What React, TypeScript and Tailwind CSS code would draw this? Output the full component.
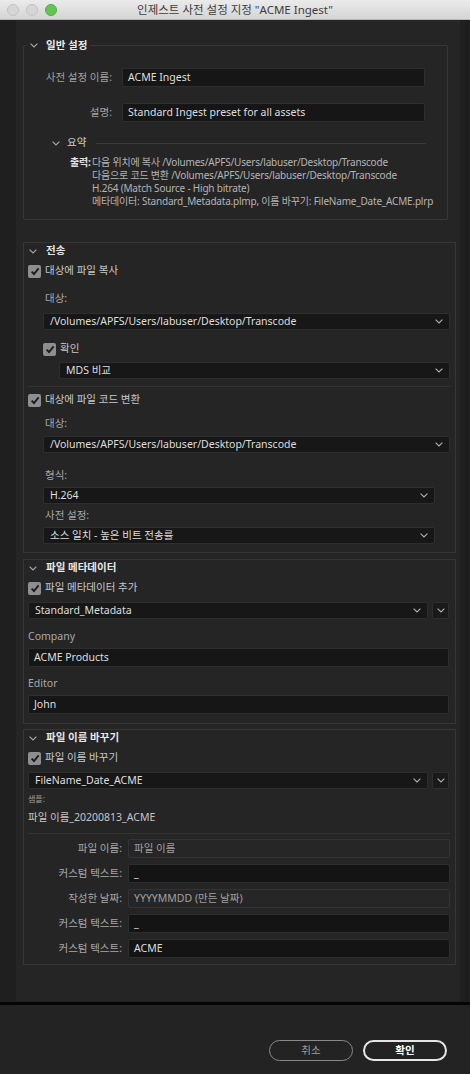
import React from 'react';

const Chevron = ({ className = '' }: { className?: string }) => (
  <svg width="8" height="5" viewBox="0 0 8 5" className={className}>
    <path d="M0.6 0.6 L4 4 L7.4 0.6" fill="none" stroke="currentColor" strokeWidth="1.1" />
  </svg>
);

const Check = () => (
  <span className="flex h-[13px] w-[13px] shrink-0 items-center justify-center rounded-[2px] bg-[#8e8e8e]">
    <svg width="10" height="9" viewBox="0 0 10 9">
      <path d="M1.6 4.6 L4 7 L8.6 1.4" fill="none" stroke="#1c1c1c" strokeWidth="1.9" />
    </svg>
  </span>
);

const Select = ({ value, className = '' }: { value: string; className?: string }) => (
  <div
    className={`flex h-[17px] items-center justify-between rounded-[2px] border border-[#2e2e2e] bg-[#171717] pr-[6px] pl-[6px] text-[10.5px] whitespace-nowrap text-[#dedede] ${className}`}
  >
    <span>{value}</span>
    <Chevron className="text-[#b0b0b0]" />
  </div>
);

const Field = ({ value, className = '' }: { value: string; className?: string }) => (
  <div
    className={`flex h-[19px] items-center rounded-[2px] border border-[#2e2e2e] bg-[#161616] px-[5px] text-[10.5px] whitespace-nowrap text-[#dedede] ${className}`}
  >
    {value}
  </div>
);

const SectionHeader = ({ title }: { title: string }) => (
  <div className="flex h-[16px] items-center pl-[5px]">
    <Chevron className="text-[#a8a8a8]" />
    <span className="ml-[9px] text-[10.5px] font-bold text-[#e8e8e8]">{title}</span>
  </div>
);

const CheckRow = ({ label, className = '' }: { label: string; className?: string }) => (
  <div className={`flex h-[14px] items-center ${className}`}>
    <Check />
    <span className="ml-[4px] text-[10.5px] text-[#c8c8c8]">{label}</span>
  </div>
);

const Label = ({ text, className = '' }: { text: string; className?: string }) => (
  <div className={`flex h-[14px] items-center text-[10.5px] text-[#a8a8a8] ${className}`}>{text}</div>
);

const RenameRow = ({ label, value, disabled = false }: { label: string; value: string; disabled?: boolean }) => (
  <div className="flex items-center">
    <span className="w-[98px] text-right text-[10.5px] whitespace-nowrap text-[#a8a8a8]">{label}</span>
    <div
      className={`ml-[6px] flex h-[19px] w-[322px] items-center rounded-[2px] border px-[5px] text-[10.5px] ${
        disabled ? 'border-[#333333] bg-[#262626] text-[#a0a0a0]' : 'border-[#2e2e2e] bg-[#141414] text-[#dedede]'
      }`}
    >
      {value}
    </div>
  </div>
);

const SmallDrop = () => (
  <div className="flex h-[17px] w-[17px] items-center justify-center rounded-[2px] border border-[#2e2e2e] bg-[#1a1a1a]">
    <Chevron className="text-[#b0b0b0]" />
  </div>
);

export default function App() {
  return (
    <div className="flex h-[1074px] w-[470px] flex-col overflow-hidden bg-[#222222] font-['Noto_Sans','Noto_Sans_CJK_KR',sans-serif]">
      {/* title bar */}
      <div className="relative flex h-[20px] shrink-0 items-center justify-center border-b border-[#b8b8b8] bg-gradient-to-b from-[#ebebeb] to-[#d5d5d5]">
        <div className="absolute top-[4px] left-[7px] flex gap-[7px]">
          <span className="h-[12px] w-[12px] rounded-full border border-[#c2c2c2] bg-[#d6d6d6]" />
          <span className="h-[12px] w-[12px] rounded-full border border-[#c2c2c2] bg-[#d6d6d6]" />
          <span className="h-[12px] w-[12px] rounded-full border border-[#4fae42] bg-[#62c655]" />
        </div>
        <span className="text-[11.5px] text-[#3c3c3c]">인제스트 사전 설정 지정 "ACME Ingest"</span>
      </div>

      {/* scroll area */}
      <div className="flex h-[982px] shrink-0 bg-[#1f1f1f]">
        <div className="ml-[16px] h-[981px] w-[444px] bg-[#252525] pt-[17px]">
          {/* 일반 설정 */}
          <fieldset className="ml-[7px] w-[425px] rounded-[2px] border border-[#363636] pb-[11px]">
            <legend className="ml-[3px] h-[16px] px-[3px] text-[10.5px] leading-[16px]">
              <span className="inline-flex h-[16px] items-center align-top">
                <Chevron className="text-[#a8a8a8]" />
                <span className="ml-[8px] font-bold text-[#ececec]">일반 설정</span>
              </span>
            </legend>
            <div className="mt-[15px] flex items-center">
              <span className="w-[88px] text-right text-[10.5px] whitespace-nowrap text-[#a3a3a3]">사전 설정 이름:</span>
              <Field value="ACME Ingest" className="ml-[10px] w-[303px]" />
            </div>
            <div className="mt-[16px] flex items-center">
              <span className="w-[88px] text-right text-[10.5px] text-[#a3a3a3]">설명:</span>
              <Field value="Standard Ingest preset for all assets" className="ml-[10px] w-[303px]" />
            </div>
            <div className="mt-[14px] mr-[21px] ml-[28px] flex h-[14px] items-center">
              <Chevron className="text-[#a8a8a8]" />
              <span className="ml-[7px] text-[10.5px] text-[#d0d0d0]">요약</span>
              <div className="ml-[10px] h-px flex-1 bg-[#3a3a3a]" />
            </div>
            <div className="mt-[6px] ml-[46px] flex text-[10px] leading-[13px] tracking-[-0.2px] whitespace-nowrap">
              <span className="w-[22px] font-bold text-[#e0e0e0]">출력:</span>
              <div className="text-[#b4b4b4]">
                <div>다음 위치에 복사 /Volumes/APFS/Users/labuser/Desktop/Transcode</div>
                <div>다음으로 코드 변환 /Volumes/APFS/Users/labuser/Desktop/Transcode</div>
                <div>H.264 (Match Source - High bitrate)</div>
                <div>메타데이터: Standard_Metadata.plmp, 이름 바꾸기: FileName_Date_ACME.plrp</div>
              </div>
            </div>
          </fieldset>

          {/* 전송 */}
          <div className="mt-[22px] ml-[7px] w-[433px] border border-[#363636] pb-[8px]">
            <SectionHeader title="전송" />
            <CheckRow label="대상에 파일 복사" className="mt-[5px] pl-[4px]" />
            <Label text="대상:" className="mt-[14px] pl-[21px]" />
            <Select value="/Volumes/APFS/Users/labuser/Desktop/Transcode" className="mt-[7px] ml-[19px] w-[407px]" />
            <CheckRow label="확인" className="mt-[12px] pl-[19px]" />
            <Select value="MDS 비교" className="mt-[6px] ml-[35px] w-[391px]" />
            <div className="mt-[7px] mr-[5px] ml-[4px] h-px bg-[#333333]" />
            <CheckRow label="대상에 파일 코드 변환" className="mt-[6px] pl-[4px]" />
            <Label text="대상:" className="mt-[10px] pl-[21px]" />
            <Select value="/Volumes/APFS/Users/labuser/Desktop/Transcode" className="mt-[5px] ml-[19px] w-[407px]" />
            <Label text="형식:" className="mt-[16px] pl-[21px]" />
            <Select value="H.264" className="mt-[4px] ml-[19px] w-[392px]" />
            <Label text="사전 설정:" className="mt-[5px] pl-[21px]" />
            <Select value="소스 일치 - 높은 비트 전송률" className="mt-[4px] ml-[19px] w-[392px]" />
          </div>

          {/* 파일 메타데이터 */}
          <div className="mt-[6px] ml-[7px] w-[433px] border border-[#363636] pb-[9px]">
            <SectionHeader title="파일 메타데이터" />
            <CheckRow label="파일 메타데이터 추가" className="mt-[5px] pl-[4px]" />
            <div className="mt-[7px] flex gap-[4px] pl-[4px]">
              <Select value="Standard_Metadata" className="w-[400px]" />
              <SmallDrop />
            </div>
            <Label text="Company" className="mt-[11px] pl-[4px]" />
            <Field value="ACME Products" className="mt-[4px] ml-[4px] w-[421px]" />
            <Label text="Editor" className="mt-[10px] pl-[4px]" />
            <Field value="John" className="mt-[4px] ml-[4px] w-[421px]" />
          </div>

          {/* 파일 이름 바꾸기 */}
          <div className="mt-[5px] ml-[7px] w-[433px] border border-[#363636] pb-[6px]">
            <SectionHeader title="파일 이름 바꾸기" />
            <CheckRow label="파일 이름 바꾸기" className="mt-[5px] pl-[4px]" />
            <div className="mt-[7px] flex gap-[4px] pl-[4px]">
              <Select value="FileName_Date_ACME" className="w-[400px]" />
              <SmallDrop />
            </div>
            <div className="mt-[4px] flex h-[12px] items-center pl-[4px] text-[8px] text-[#a0a0a0]">샘플:</div>
            <div className="mt-[6px] flex h-[14px] items-center pl-[4px] text-[10.5px] text-[#c4c4c4]">파일 이름_20200813_ACME</div>
            <div className="mt-[8px] mr-[5px] ml-[4px] h-px bg-[#333333]" />
            <div className="mt-[5px] flex flex-col gap-[6px]">
              <RenameRow label="파일 이름:" value="파일 이름" disabled />
              <RenameRow label="커스텀 텍스트:" value="_" />
              <RenameRow label="작성한 날짜:" value="YYYYMMDD (만든 날짜)" disabled />
              <RenameRow label="커스텀 텍스트:" value="_" />
              <RenameRow label="커스텀 텍스트:" value="ACME" />
            </div>
          </div>
        </div>
        <div className="ml-[6px] h-full w-px bg-[#1a1a1a]" />
      </div>

      <div className="h-[3px] shrink-0 bg-[#050505]" />

      {/* footer */}
      <div className="flex flex-1 items-start justify-end gap-[10px] bg-[#232323] pt-[35px] pr-[23px]">
        <button className="flex h-[21px] w-[84px] items-center justify-center rounded-full border-[1.5px] border-[#8a8a8a] text-[10.5px] text-[#a0a0a0]">
          취소
        </button>
        <button className="flex h-[21px] w-[84px] items-center justify-center rounded-full border-2 border-[#e6e6e6] text-[10.5px] font-bold text-white">
          확인
        </button>
      </div>
    </div>
  );
}
